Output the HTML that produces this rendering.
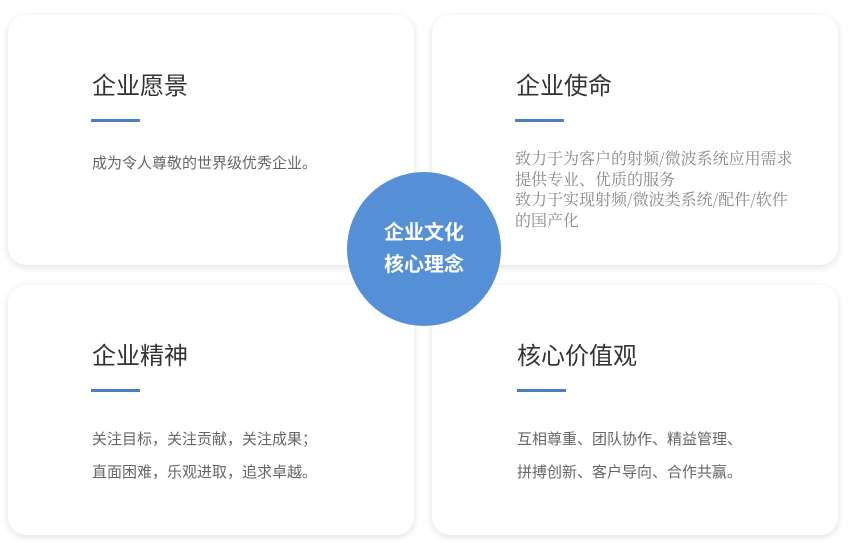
<!DOCTYPE html>
<html><head><meta charset="utf-8"><style>
body{margin:0;width:848px;height:543px;background:#fff;position:relative;overflow:hidden;font-family:"Liberation Sans","Noto Sans CJK SC",sans-serif}
.card{position:absolute;width:406px;height:250px;background:#fff;border-radius:18px;box-shadow:0 2px 8px rgba(0,0,0,0.12)}
.t{position:absolute;font-size:24px;color:#333;line-height:30px;white-space:nowrap}
.l{position:absolute;width:49px;height:3px;background:#4a7fc1}
.p{position:absolute;font-size:15px;color:#666;white-space:nowrap}
.circ{position:absolute;left:347px;top:172px;width:154px;height:154px;border-radius:50%;background:#558fd6;color:#fff;font-weight:bold;font-size:20px;line-height:32px;text-align:center;display:flex;align-items:center;justify-content:center}
</style></head><body>
<div class="card" style="left:8px;top:15px"></div>
<div class="card" style="left:432px;top:15px"></div>
<div class="card" style="left:8px;top:285px"></div>
<div class="card" style="left:432px;top:285px"></div>

<div class="t" style="left:92px;top:72px">企业愿景</div>
<div class="l" style="left:91px;top:119px"></div>
<div class="p" style="left:92px;top:153px;line-height:22px">成为令人尊敬的世界级优秀企业。</div>

<div class="t" style="left:516px;top:72px">企业使命</div>
<div class="l" style="left:515px;top:119px"></div>
<div class="p" style="left:515px;top:148px;font-size:16px;line-height:20.5px;color:#888;font-family:'Noto Serif CJK SC',serif">致力于为客户的射频/微波系统应用需求<br>提供专业、优质的服务<br>致力于实现射频/微波类系统/配件/软件<br>的国产化</div>

<div class="t" style="left:92px;top:342px">企业精神</div>
<div class="l" style="left:91px;top:389px"></div>
<div class="p" style="left:92px;top:423px;line-height:33px">关注目标，关注贡献，关注成果；<br>直面困难，乐观进取，追求卓越。</div>

<div class="t" style="left:517px;top:342px">核心价值观</div>
<div class="l" style="left:517px;top:389px"></div>
<div class="p" style="left:517px;top:423px;line-height:33px">互相尊重、团队协作、精益管理、<br>拼搏创新、客户导向、合作共赢。</div>

<div class="circ"><div>企业文化<br>核心理念</div></div>
</body></html>
